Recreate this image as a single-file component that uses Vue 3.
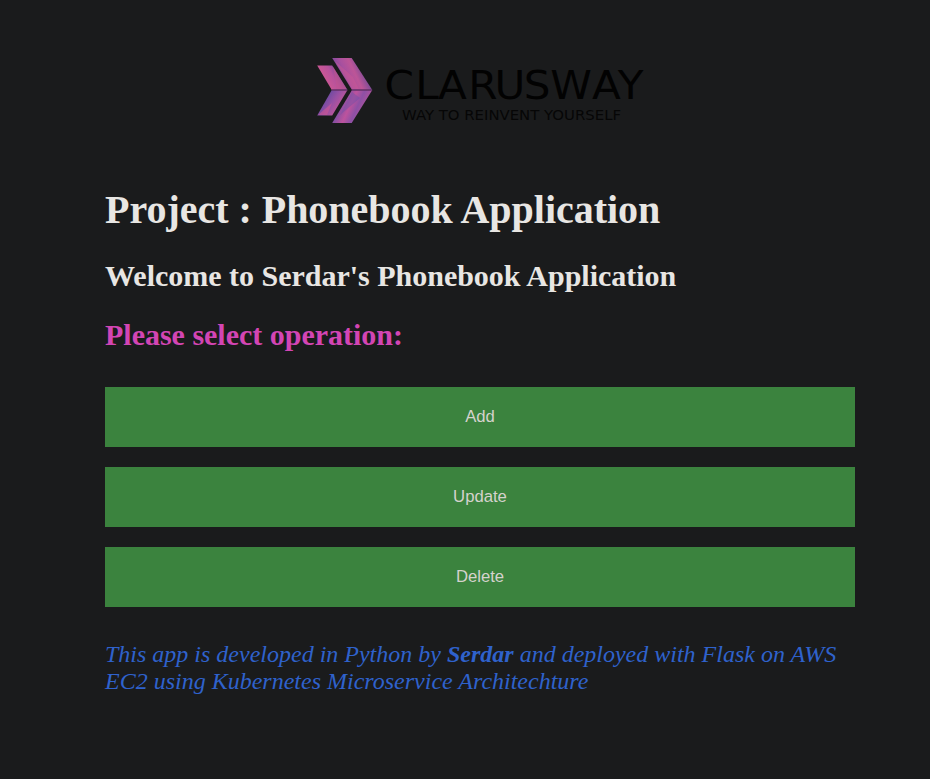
<script setup>
const operations = ['Add', 'Update', 'Delete']
</script>

<template>
  <main class="page">
    <svg class="logo" width="330" height="70" viewBox="0 0 330 70" role="img" aria-label="Clarusway">
      <defs>
        <linearGradient id="upper" gradientUnits="userSpaceOnUse" x1="17" y1="14" x2="47" y2="0">
          <stop offset="0" stop-color="#67479b" />
          <stop offset="0.35" stop-color="#a8509f" />
          <stop offset="0.6" stop-color="#bd5597" />
          <stop offset="1" stop-color="#5d4796" />
        </linearGradient>
        <linearGradient id="lower" gradientUnits="userSpaceOnUse" x1="20" y1="54" x2="46" y2="66">
          <stop offset="0" stop-color="#704da5" />
          <stop offset="0.4" stop-color="#bd539d" />
          <stop offset="0.65" stop-color="#8d50a5" />
          <stop offset="1" stop-color="#b95399" />
        </linearGradient>
        <linearGradient id="small-upper" gradientUnits="userSpaceOnUse" x1="4" y1="20" x2="26" y2="8">
          <stop offset="0" stop-color="#d35a92" />
          <stop offset="0.5" stop-color="#b8529c" />
          <stop offset="1" stop-color="#574797" />
        </linearGradient>
        <linearGradient id="small-lower" gradientUnits="userSpaceOnUse" x1="4" y1="46" x2="22" y2="58">
          <stop offset="0" stop-color="#6049a0" />
          <stop offset="0.5" stop-color="#9750a4" />
          <stop offset="1" stop-color="#c65697" />
        </linearGradient>
      </defs>
      <path d="M2.2 8.5H17.2L32.5 33H16.8Z" fill="url(#small-upper)" />
      <path d="M16.8 33H32.5L17.2 58.6H2.2Z" fill="url(#small-lower)" />
      <path d="M17.2 1H36.7L57.3 33H37Z" fill="url(#upper)" />
      <path d="M37 33H57.3L36.7 66H17.2Z" fill="url(#lower)" />
      <path d="M18 9.5L32 32.5H22Z" fill="#c2538f" opacity="0.6" />
      <path d="M3 58L17 46L12 58Z" fill="#d65792" opacity="0.55" />
      <path d="M20 4L38 20L44 32H37Z" fill="#cb5793" opacity="0.5" />
      <path d="M37 35L45 41L25 58Z" fill="#7250a8" opacity="0.5" />
      <path d="M16.8 33H32M37 33H57" stroke="#613067" stroke-width="1.4" />
      <text class="brand" transform="scale(1.08 1)" x="64.4 92.8 113.9 141.9 166.3 193.4 217.9 256.5 280.3" y="42">CLARUSWAY</text>
      <text class="tag" x="87" y="63" textLength="219" lengthAdjust="spacingAndGlyphs">WAY TO REINVENT YOURSELF</text>
    </svg>
    <h1>Project : Phonebook Application</h1>
    <h2>Welcome to Serdar's Phonebook Application</h2>
    <h2 class="prompt">Please select operation:</h2>
    <div class="operations">
      <button v-for="op in operations" :key="op" type="button">{{ op }}</button>
    </div>
    <p class="credit">This app is developed in Python by <b>Serdar</b> and deployed with Flask on AWS EC2 using Kubernetes Microservice Architechture</p>
  </main>
</template>

<style>
body { background: #1a1b1c; }
</style>

<style scoped>
.page {
  box-sizing: border-box;
  width: 750px;
  margin-left: 105px;
  padding-top: 57px;
  font-family: "Liberation Serif", "Times New Roman", serif;
  color: #e8e6e3;
  display: flex;
  flex-direction: column;
}
.logo { align-self: center; }
.brand { font: 39px "DejaVu Sans", sans-serif; fill: #020202; }
.tag { font: 14px "DejaVu Sans", sans-serif; fill: #060606; }
h1 { margin: 60px 0 0; font-size: 40px; line-height: 46px; letter-spacing: -0.02px; }
h2 { margin: 26px 0 0; font-size: 30px; line-height: 34px; letter-spacing: -0.01px; }
.prompt { margin-top: 25px; color: #d345b4; }
.operations { display: flex; flex-direction: column; gap: 20px; margin-top: 35px; }
button {
  height: 60px;
  border: 0;
  padding: 0;
  background: #3b833e;
  color: #d5d2cd;
  font: 16.7px "Liberation Sans", Arial, sans-serif;
}
.credit { margin: 34px 0 0; font-size: 24px; line-height: 27px; font-style: italic; color: #2f62cc; }
</style>
